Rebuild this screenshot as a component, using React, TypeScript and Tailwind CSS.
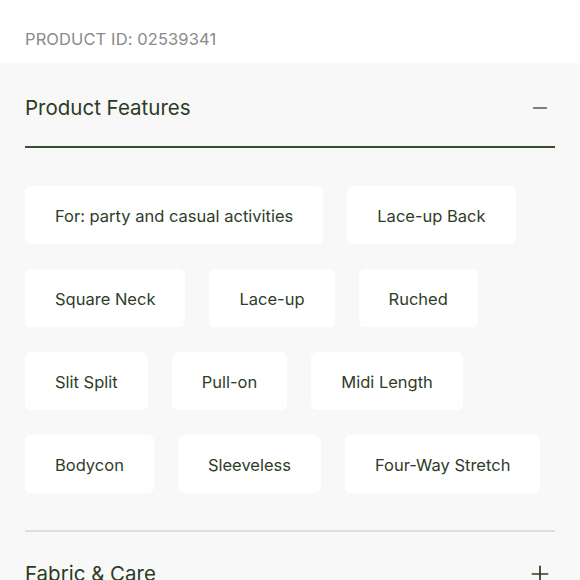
import { Minus, Plus } from "lucide-react";

const rows = [
  ["For: party and casual activities", "Lace-up Back"],
  ["Square Neck", "Lace-up", "Ruched"],
  ["Slit Split", "Pull-on", "Midi Length"],
  ["Bodycon", "Sleeveless", "Four-Way Stretch"],
];

export default function App() {
  return (
    <div className="w-[580px] h-[580px] overflow-hidden bg-[#f8f8f8] font-['Inter',sans-serif]">
      <div className="h-[63px] bg-white px-[25px] pt-[28px]">
        <p className="text-[16.5px] leading-[22px] text-[#8a8a8a] tracking-[0.1px]">
          PRODUCT ID: 02539341
        </p>
      </div>

      <div className="px-[25px]">
        <div className="flex items-center justify-between h-[85px] pt-[7px] border-b-2 border-[#3b4d30]">
          <h2 className="text-[20.5px] text-[#2c3b24]">Product Features</h2>
          <Minus className="w-[22px] h-[22px] mr-[4px] text-[#555]" strokeWidth={1.6} />
        </div>

        <div className="flex flex-col gap-[25px] pt-[38px] pb-[37px] border-b-2 border-[#dedede]">
          {rows.map((row, i) => (
            <div key={i} className="flex gap-[24px]">
              {row.map((f) => (
                <div
                  key={f}
                  className="h-[58px] px-[30px] pt-[2px] flex items-center bg-white rounded-[6px] text-[16.5px] text-[#2e3d28] whitespace-nowrap"
                >
                  {f}
                </div>
              ))}
            </div>
          ))}
        </div>

        <div className="flex items-center justify-between pt-[27px]">
          <h2 className="text-[20.5px] text-[#2c3b24]">Fabric &amp; Care</h2>
          <Plus className="w-[26px] h-[26px] mr-[2px] text-[#2c3b24]" strokeWidth={1.6} />
        </div>
      </div>
    </div>
  );
}
